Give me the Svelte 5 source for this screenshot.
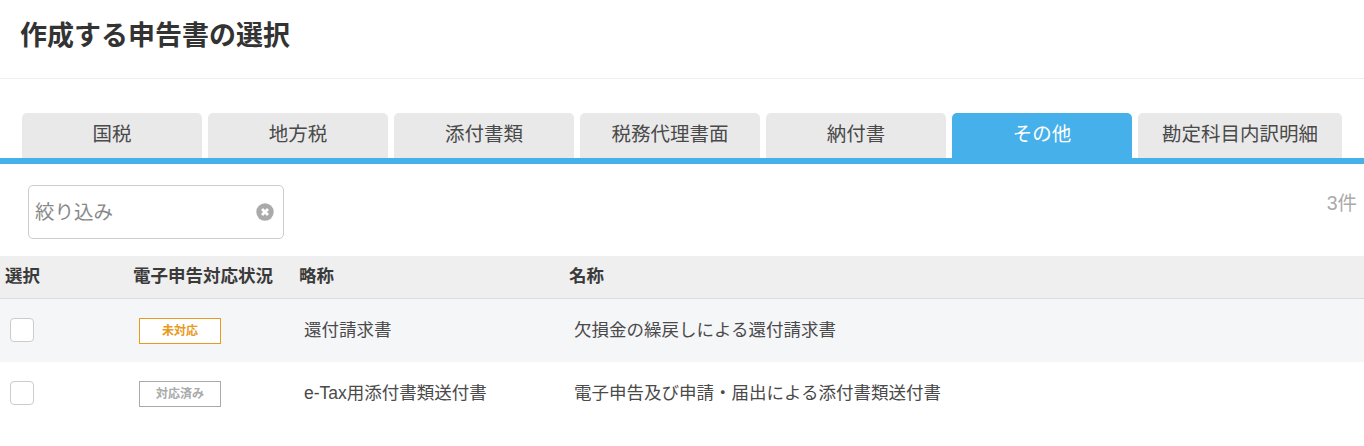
<script lang="ts">
  const tabs = ['国税', '地方税', '添付書類', '税務代理書面', '納付書', 'その他', '勘定科目内訳明細']
  const activeTab = 'その他'

  const rows = [
    { status: '未対応', done: false, short: '還付請求書', name: '欠損金の繰戻しによる還付請求書' },
    { status: '対応済み', done: true, short: 'e-Tax用添付書類送付書', name: '電子申告及び申請・届出による添付書類送付書' },
  ]
</script>

<div class="page">
  <header class="title-bar">
    <h1>作成する申告書の選択</h1>
  </header>

  <nav class="tabs">
    {#each tabs as tab}
      <button class="tab" class:active={tab === activeTab} class:wide={tab.length > 6}>{tab}</button>
    {/each}
  </nav>

  <div class="filter-row">
    <div class="filter">
      <input type="text" placeholder="絞り込み" />
      <svg class="clear" width="18" height="18" viewBox="0 0 18 18" aria-hidden="true">
        <circle cx="9" cy="9" r="8.7" fill="#aaa" />
        <path d="M6 6l6 6M12 6l-6 6" stroke="#fff" stroke-width="2.8" />
      </svg>
    </div>
    <span class="count">3件</span>
  </div>

  <div class="table">
    <div class="row head">
      <div class="c-select">選択</div>
      <div class="c-status">電子申告対応状況</div>
      <div class="c-short">略称</div>
      <div class="c-name">名称</div>
    </div>
    {#each rows as row, i}
      <div class="row body" class:odd={i === 0}>
        <div class="c-select"><span class="check"></span></div>
        <div class="c-status"><span class="badge" class:done={row.done}>{row.status}</span></div>
        <div class="c-short">{row.short}</div>
        <div class="c-name">{row.name}</div>
      </div>
    {/each}
  </div>
</div>

<style>
  :global(body) {
    background: #fff;
  }

  .page {
    font-family: "Liberation Sans", "Noto Sans CJK JP", sans-serif;
    color: #333;
    height: 446px;
    overflow: hidden;
  }

  .title-bar {
    height: 79px;
    border-bottom: 1px solid #eee;
    padding: 20px 20px 0;
    box-sizing: border-box;
  }

  h1 {
    margin: 0;
    font-size: 27px;
    line-height: 32px;
    font-weight: 700;
    color: #333;
  }

  .tabs {
    display: flex;
    gap: 6px;
    margin-top: 34px;
    padding-left: 22px;
    border-bottom: 6px solid #45b0e9;
  }

  .tab {
    width: 180px;
    height: 45px;
    padding: 0 0 6px;
    border: none;
    border-radius: 5px 5px 0 0;
    background: #e9e9e9;
    color: #4a4a4a;
    font-family: inherit;
    font-size: 19.5px;
  }

  .tab.wide {
    width: 204px;
  }

  .tab.active {
    background: #45b0e9;
    color: #fff;
  }

  .filter-row {
    display: flex;
    justify-content: space-between;
    padding: 21px 7px 0 28px;
    height: 71px;
  }

  .filter {
    position: relative;
    width: 256px;
    height: 54px;
  }

  .filter input {
    width: 100%;
    height: 100%;
    box-sizing: border-box;
    border: 1px solid #ccc;
    border-radius: 5px;
    padding: 0 6px;
    font-family: inherit;
    font-size: 19.5px;
    color: #333;
    outline: none;
  }

  .filter input::placeholder {
    color: #888;
    opacity: 1;
  }

  .clear {
    position: absolute;
    right: 10px;
    top: 18px;
  }

  .count {
    font-size: 19.5px;
    line-height: 36px;
    color: #aaa;
  }

  .row {
    display: grid;
    grid-template-columns: 128px 166px 270px 1fr;
    align-items: center;
  }

  .head {
    height: 43px;
    box-sizing: border-box;
    background: #efefef;
    border-bottom: 1px solid #ddd;
    font-size: 17.5px;
    font-weight: 700;
    color: #3a3a3a;
    padding-bottom: 5px;
  }

  .head > div {
    padding-left: 5px;
  }

  .body {
    height: 63px;
    font-size: 17.5px;
    color: #4a4a4a;
  }

  .body.odd {
    background: #f5f6f8;
  }

  .body .c-select {
    padding-left: 10px;
    padding-bottom: 2px;
  }

  .body .c-status {
    padding-left: 11px;
  }

  .body .c-short,
  .body .c-name {
    padding-left: 10px;
    padding-bottom: 5px;
  }

  .check {
    display: block;
    width: 24px;
    height: 24px;
    box-sizing: border-box;
    background: #fff;
    border: 1px solid #ccc;
    border-radius: 4px;
  }

  .badge {
    display: block;
    width: 82px;
    height: 26px;
    box-sizing: border-box;
    border: 1px solid #e89a20;
    color: #e89a20;
    background: #fff;
    font-size: 12px;
    font-weight: 700;
    line-height: 24px;
    text-align: center;
  }

  .badge.done {
    border-color: #aaa;
    color: #aaa;
  }
</style>
